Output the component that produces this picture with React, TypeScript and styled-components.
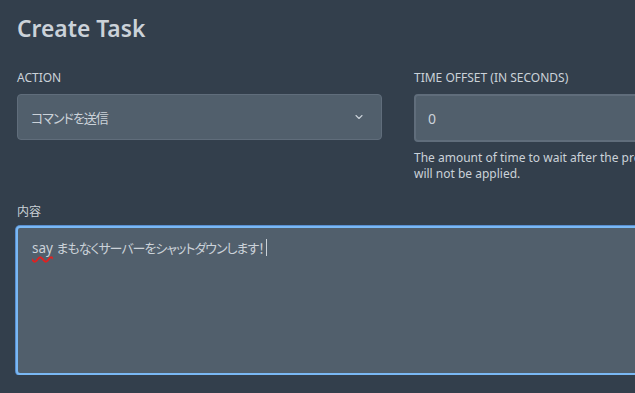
import styled, { createGlobalStyle } from "styled-components";
import { ChevronDown } from "lucide-react";

const GlobalStyle = createGlobalStyle`
  html, body {
    margin: 0;
    padding: 0;
    background: #333f4c;
    overflow: hidden;
  }
  * {
    box-sizing: border-box;
  }
`;

const FONT = `"Noto Sans", "Noto Sans CJK JP", sans-serif`;

export default function App() {
  return (
    <>
      <GlobalStyle />
      <Modal>
        <Title>Create Task</Title>
        <FieldRow>
          <Field>
            <Label>Action</Label>
            <SelectBox>
              <JpText>コマンドを送信</JpText>
              <ChevronDown size={12} strokeWidth={2.2} />
            </SelectBox>
          </Field>
          <Field>
            <Label>Time offset (in seconds)</Label>
            <InputBox>0</InputBox>
            <HelpText>
              The amount of time to wait after the previous task executes before
              running this one. If this is the first task on a schedule this
              <br />
              will not be applied.
            </HelpText>
          </Field>
        </FieldRow>
        <Field>
          <Label $plain $gap={6}>内容</Label>
          <TextArea>
            <Misspelled>say</Misspelled>{" "}
            <JpText>まもなくサーバーをシャットダウンします！</JpText>
            <Caret />
          </TextArea>
        </Field>
      </Modal>
    </>
  );
}

const Modal = styled.div`
  width: 1200px;
  padding: 14px 17px 0;
  font-family: ${FONT};
  color: #cbd2d9;
`;

const Title = styled.h2`
  margin: 0 0 26px;
  font-size: 22.8px;
  line-height: 30px;
  font-weight: 600;
  color: #cbd2d9;
`;

const FieldRow = styled.div`
  display: grid;
  grid-template-columns: 365px 1fr;
  column-gap: 32px;
  margin-bottom: 22px;
`;

const Field = styled.div`
  display: flex;
  flex-direction: column;
`;

const Label = styled.label<{ $plain?: boolean; $gap?: number }>`
  display: block;
  font-size: 12px;
  line-height: 16px;
  margin-bottom: ${(p) => p.$gap ?? 8}px;
  text-transform: ${(p) => (p.$plain ? "none" : "uppercase")};
  color: #cbd2d9;
`;

const JpText = styled.span`
  font-size: 13px;
  letter-spacing: -1px;
  font-feature-settings: "palt";
`;

const SelectBox = styled.div`
  display: flex;
  align-items: center;
  justify-content: space-between;
  height: 46px;
  padding: 0 16px 0 13px;
  background: #515f6c;
  border: 1px solid #606d7b;
  border-radius: 4px;
  font-size: 14px;
  color: #cbd2d9;

  svg {
    color: #cbd2d9;
  }
`;

const InputBox = styled.div`
  display: flex;
  align-items: center;
  height: 48px;
  padding: 0 12px;
  background: #515f6c;
  border: 2px solid #606d7b;
  border-radius: 4px;
  font-size: 14px;
  color: #cbd2d9;
`;

const HelpText = styled.p`
  margin: 8px 0 0;
  font-size: 12px;
  line-height: 16px;
  white-space: nowrap;
  color: #cbd2d9;
`;

const TextArea = styled.div`
  height: 149px;
  width: 1170px;
  margin-left: -1px;
  padding: 9px 14px;
  background: #515f6c;
  border: 2px solid #7ab8f4;
  box-shadow: 0 0 0 1px #5a8fcf;
  border-radius: 4px;
  font-size: 13.5px;
  line-height: 22px;
  color: #cbd2d9;
`;

const Misspelled = styled.span`
  text-decoration: underline wavy #e02020;
  text-decoration-thickness: 1.5px;
  text-decoration-skip-ink: none;
  text-underline-offset: 3px;
`;

const Caret = styled.span`
  display: inline-block;
  width: 1px;
  height: 17px;
  margin-left: 2px;
  vertical-align: -3px;
  background: #cbd2d9;
`;
